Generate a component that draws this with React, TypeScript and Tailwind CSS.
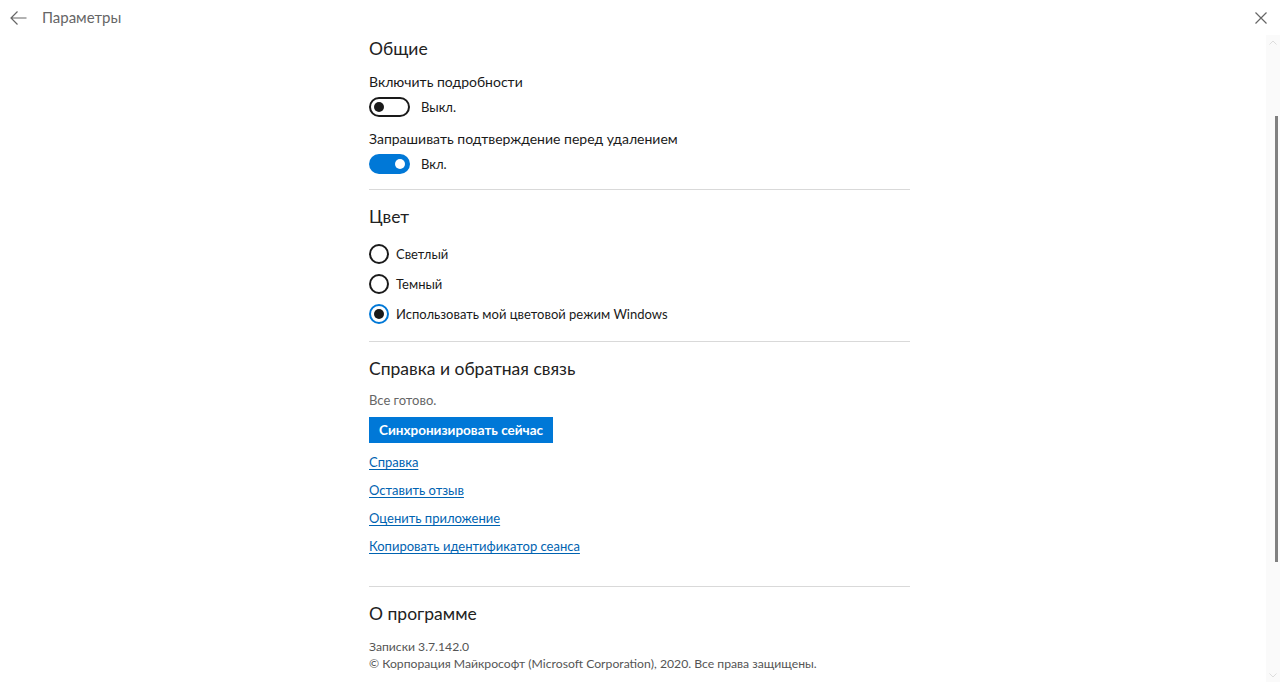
import { useState } from "react";

const font = { fontFamily: 'Lato, "Noto Sans", sans-serif' };

const Toggle = ({ on }: { on: boolean }) =>
  on ? (
    <div className="flex h-[20px] w-[41px] items-center justify-end rounded-full bg-[#0078d7] pr-[5px]">
      <div className="h-[10px] w-[10px] rounded-full bg-white" />
    </div>
  ) : (
    <div className="flex h-[20px] w-[41px] items-center rounded-full border-2 border-[#1a1a1a] pl-[3px]">
      <div className="h-[10px] w-[10px] rounded-full bg-[#1a1a1a]" />
    </div>
  );

const Radio = ({ checked }: { checked: boolean }) =>
  checked ? (
    <div className="flex h-[20px] w-[20px] items-center justify-center rounded-full border-2 border-[#0078d7]">
      <div className="h-[10px] w-[10px] rounded-full bg-[#1a1a1a]" />
    </div>
  ) : (
    <div className="h-[20px] w-[20px] rounded-full border-2 border-[#1a1a1a]" />
  );

const links = ["Справка", "Оставить отзыв", "Оценить приложение", "Копировать идентификатор сеанса"];
const themes = ["Светлый", "Темный", "Использовать мой цветовой режим Windows"];

export default function App() {
  const [theme] = useState(2);
  return (
    <div className="relative h-[682px] w-full overflow-hidden bg-white text-[#1a1a1a]" style={font}>
      {/* title bar */}
      <div className="flex h-[35px] items-center">
        <svg className="ml-[10px]" width="17" height="14" viewBox="0 0 17 14" fill="none" stroke="#666" strokeWidth="1.2">
          <path d="M16.5 7H1M7.5 0.5L1 7l6.5 6.5" />
        </svg>
        <span className="ml-[15px] text-[15px] text-[#666]">Параметры</span>
        <svg className="ml-auto mr-[13px]" width="12" height="12" viewBox="0 0 12 12" stroke="#666" strokeWidth="1.2">
          <path d="M0.5 0.5l11 11M11.5 0.5l-11 11" />
        </svg>
      </div>

      <div className="ml-[369px] w-[541px]">
        <h2 className="text-[17.5px] leading-[28px] text-[#222]">Общие</h2>
        <div className="mt-[9px] text-[14px] leading-[20px]">Включить подробности</div>
        <div className="mt-[5px] flex items-center gap-[11px]">
          <Toggle on={false} />
          <span className="text-[13px] leading-[20px]">Выкл.</span>
        </div>
        <div className="mt-[12px] text-[14px] leading-[20px]">Запрашивать подтверждение перед удалением</div>
        <div className="mt-[5px] flex items-center gap-[11px]">
          <Toggle on />
          <span className="text-[13px] leading-[20px]">Вкл.</span>
        </div>

        <div className="mt-[15px] h-px bg-[#d9d9d9]" />

        <h2 className="mt-[13px] text-[17.5px] leading-[28px] text-[#222]">Цвет</h2>
        <div className="mt-[13px] flex flex-col gap-[10px]">
          {themes.map((t, i) => (
            <div key={t} className="flex items-center gap-[7px]">
              <Radio checked={i === theme} />
              <span className="text-[13px] leading-[20px]">{t}</span>
            </div>
          ))}
        </div>

        <div className="mt-[17px] h-px bg-[#d9d9d9]" />

        <h2 className="mt-[13px] text-[17.5px] leading-[28px] text-[#222]">Справка и обратная связь</h2>
        <div className="mt-[7px] text-[13px] leading-[20px] text-[#666]">Все готово.</div>
        <button className="mt-[7px] flex h-[26px] items-center bg-[#0078d7] px-[10px] text-[13.5px] font-bold text-white">
          Синхронизировать сейчас
        </button>
        <div className="mt-[9px] flex flex-col items-start gap-[8px]">
          {links.map((l) => (
            <a key={l} className="text-[13px] leading-[20px] text-[#0063b1] underline underline-offset-2">
              {l}
            </a>
          ))}
        </div>

        <div className="mt-[30px] h-px bg-[#d9d9d9]" />

        <h2 className="mt-[13px] text-[17.5px] leading-[28px] text-[#222]">О программе</h2>
        <div className="mt-[10px] text-[12.2px] leading-[17px] text-[#555]">
          <div>Записки 3.7.142.0</div>
          <div>© Корпорация Майкрософт (Microsoft Corporation), 2020. Все права защищены.</div>
        </div>
      </div>

      {/* scrollbar */}
      <div className="absolute right-0 top-[35px] bottom-0 flex w-[14px] flex-col items-center bg-[#fafafa]">
        <svg className="mt-[5px]" width="8" height="5" viewBox="0 0 8 5" fill="none" stroke="#ddd">
          <path d="M0.5 4.5L4 1l3.5 3.5" />
        </svg>
        <div className="ml-[6px] mt-[71px] h-[446px] w-[3px] bg-[#808080]" />
        <svg className="mt-auto mb-[4px]" width="8" height="5" viewBox="0 0 8 5" fill="none" stroke="#ddd">
          <path d="M0.5 0.5L4 4l3.5-3.5" />
        </svg>
      </div>
    </div>
  );
}
